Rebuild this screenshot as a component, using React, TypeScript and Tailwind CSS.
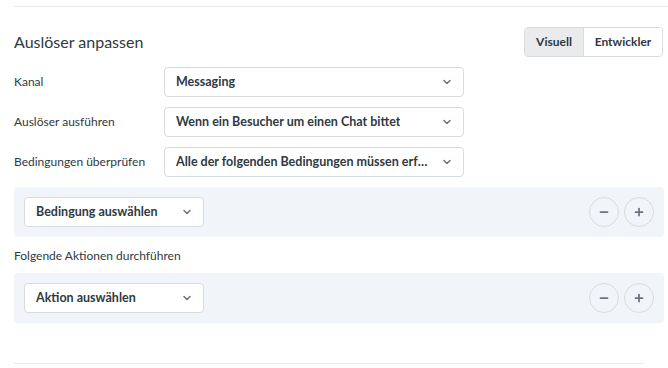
import { ChevronDown, Minus, Plus } from "lucide-react";

const font = { fontFamily: 'Lato, "Noto Sans", sans-serif' };

function Select({ label, width }: { label: string; width: string }) {
  return (
    <div
      className={`${width} h-[30px] flex items-center justify-between gap-2 rounded-[4px] border border-[#d8dcde] bg-white pl-[11px] pr-[10px]`}
    >
      <span className="min-w-0 truncate text-[12.5px] font-bold text-[#2f3941]">{label}</span>
      <ChevronDown className="w-3 h-3 shrink-0 text-[#68737d]" strokeWidth={3} />
    </div>
  );
}

function FieldRow({ label, value }: { label: string; value: string }) {
  return (
    <div className="flex items-center">
      <label className="w-[150px] text-[12px] text-[#2f3941]">{label}</label>
      <Select label={value} width="w-[300px]" />
    </div>
  );
}

function RuleBox({ placeholder }: { placeholder: string }) {
  return (
    <div className="h-[50px] flex items-center justify-between rounded-[4px] bg-[#f1f5f9] pl-[10px] pr-[10px]">
      <Select label={placeholder} width="w-[180px]" />
      <div className="flex items-center gap-[5px]">
        <button className="w-[30px] h-[30px] shrink-0 rounded-full border border-[#d8dcde] flex items-center justify-center text-[#68737d]">
          <Minus className="w-3 h-3" strokeWidth={3.5} />
        </button>
        <button className="w-[30px] h-[30px] shrink-0 rounded-full border border-[#d8dcde] flex items-center justify-center text-[#68737d]">
          <Plus className="w-3 h-3" strokeWidth={3.5} />
        </button>
      </div>
    </div>
  );
}

export default function App() {
  return (
    <div className="w-[668px] h-[368px] bg-white pl-[14px] pt-[6px] overflow-hidden" style={font}>
      <div className="border-t border-[#e9ebed]" />

      {/* Header */}
      <div className="flex items-center justify-between pr-[5px] mt-[20px]">
        <h2 className="text-[16px] leading-[24px] font-normal text-[#2f3941]">Auslöser anpassen</h2>
        <div className="flex h-[30px] rounded-[4px] border border-[#d8dcde] overflow-hidden">
          <button className="w-[59px] bg-[#e9ebed] border-r border-[#d8dcde] text-[12px] font-bold text-[#2f3941]">
            Visuell
          </button>
          <button className="w-[78px] bg-white text-[12px] font-bold text-[#2f3941]">
            Entwickler
          </button>
        </div>
      </div>

      {/* Fields */}
      <div className="flex flex-col gap-[10px] mt-[10px]">
        <FieldRow label="Kanal" value="Messaging" />
        <FieldRow label="Auslöser ausführen" value="Wenn ein Besucher um einen Chat bittet" />
        <FieldRow label="Bedingungen überprüfen" value="Alle der folgenden Bedingungen müssen erfüllt sein" />
      </div>

      <div className="mt-[10px] pr-[4px]">
        <RuleBox placeholder="Bedingung auswählen" />
      </div>

      <p className="mt-[10px] h-[18px] leading-[18px] text-[12px] text-[#2f3941]">Folgende Aktionen durchführen</p>

      <div className="mt-[8px] pr-[4px]">
        <RuleBox placeholder="Aktion auswählen" />
      </div>

      <div className="mt-[40px] w-[630px] border-t border-[#e9ebed]" />
    </div>
  );
}
